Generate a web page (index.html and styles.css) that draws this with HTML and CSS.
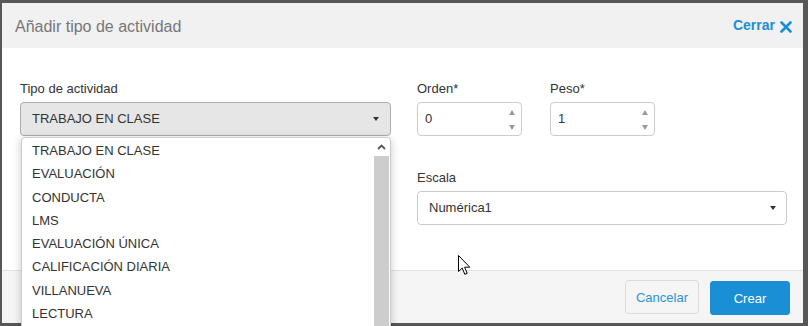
FILE: index.html
```html
<!DOCTYPE html>
<html lang="es">
<head>
<meta charset="utf-8">
<title>Añadir tipo de actividad</title>
<link rel="stylesheet" href="styles.css">
</head>
<body>
<div class="modal">
  <div class="modal-header">
    <h4 class="modal-title">Añadir tipo de actividad</h4>
    <a class="close-link">Cerrar <svg class="close-x" width="12" height="12" viewBox="0 0 12 12"><path d="M1.5 1.5 L10.5 10.5 M10.5 1.5 L1.5 10.5" stroke="#1a8fd6" stroke-width="2.6" stroke-linecap="round"/></svg></a>
  </div>
  <div class="modal-body">
    <div class="row">
      <div class="field field-tipo">
        <label class="lbl">Tipo de actividad</label>
        <div class="select select-active">TRABAJO EN CLASE<span class="caret"></span></div>
        <div class="dropdown">
          <ul class="options">
            <li>TRABAJO EN CLASE</li>
            <li>EVALUACIÓN</li>
            <li>CONDUCTA</li>
            <li>LMS</li>
            <li>EVALUACIÓN ÚNICA</li>
            <li>CALIFICACIÓN DIARIA</li>
            <li>VILLANUEVA</li>
            <li>LECTURA</li>
          </ul>
          <div class="scrollbar">
            <div class="sb-arrow"><svg width="9" height="6" viewBox="0 0 9 6"><path d="M1 5 L4.5 1.5 L8 5" fill="none" stroke="#555" stroke-width="1.8"/></svg></div>
            <div class="sb-thumb"></div>
          </div>
        </div>
      </div>
      <div class="field field-num">
        <label class="lbl">Orden*</label>
        <div class="num">0<span class="spin"><span class="up"></span><span class="down"></span></span></div>
      </div>
      <div class="field field-num">
        <label class="lbl">Peso*</label>
        <div class="num">1<span class="spin"><span class="up"></span><span class="down"></span></span></div>
      </div>
    </div>
    <div class="row row-two">
      <div class="field field-escala">
        <label class="lbl">Escala</label>
        <div class="select select-white">Numérica1<span class="caret"></span></div>
      </div>
    </div>
  </div>
  <div class="modal-footer">
    <button class="btn btn-cancel">Cancelar</button>
    <button class="btn btn-primary">Crear</button>
  </div>
</div>
<svg class="cursor" width="13" height="21" viewBox="0 0 13 21"><path d="M0.5 0.5 L0.5 16.5 L4.2 13 L6.8 19.3 L9.2 18.3 L6.6 12.2 L11.8 12.2 Z" fill="#fff" stroke="#000" stroke-width="1" stroke-linejoin="round"/></svg>
</body>
</html>
```
FILE: styles.css
```css
html, body {
  margin: 0;
  padding: 0;
}
body {
  width: 808px;
  height: 326px;
  overflow: hidden;
  background: #575757;
  font-family: "Liberation Sans", Arial, sans-serif;
  color: #333;
  position: relative;
}
.modal {
  margin: 3px 0 0 2px;
  width: 801px;
  height: 320px;
  background: #fff;
  display: flex;
  flex-direction: column;
}
.modal-header {
  height: 45px;
  background: #f1f1f1;
  display: flex;
  align-items: center;
  justify-content: space-between;
  padding: 0 11px 0 13px;
  box-sizing: border-box;
}
.modal-title {
  margin: 0;
  font-size: 16px;
  font-weight: normal;
  color: #777;
  position: relative;
  top: 1px;
}
.close-link {
  font-size: 14px;
  font-weight: bold;
  color: #1a8fd6;
  display: flex;
  align-items: center;
  gap: 5px;
  position: relative;
  top: -1px;
}
.close-x {
  position: relative;
  top: 2px;
}
.modal-body {
  flex: 1;
  padding: 32px 0 0 18px;
  box-sizing: border-box;
}
.row {
  display: flex;
}
.row-two {
  margin-top: 33px;
  padding-left: 397px;
}
.field {
  position: relative;
}
.field-tipo {
  width: 371px;
  margin-right: 26px;
}
.field-num {
  width: 105px;
  margin-right: 28px;
}
.field-escala {
  width: 370px;
}
.lbl {
  display: block;
  font-size: 13px;
  line-height: 18px;
  margin-bottom: 4px;
  color: #333;
}
.select {
  position: relative;
  height: 34px;
  box-sizing: border-box;
  border-radius: 4px;
  padding-left: 11px;
  font-size: 13px;
  line-height: 32px;
  color: #333;
}
.select-active {
  background: #e6e6e6;
  border: 1px solid #adadad;
}
.select-white {
  background: #fff;
  border: 1px solid #ccc;
}
.caret {
  position: absolute;
  right: 11px;
  top: 14px;
  width: 0;
  height: 0;
  border-left: 3.5px solid transparent;
  border-right: 3.5px solid transparent;
  border-top: 4px solid #333;
}
.select-white .caret {
  right: 10px;
}
.dropdown {
  position: absolute;
  left: 1px;
  top: 57px;
  width: 370px;
  height: 200px;
  background: #fff;
  border: 1px solid #ccc;
  border-radius: 4px 4px 0 0;
  box-shadow: 0 2px 8px rgba(0,0,0,0.22);
  box-sizing: border-box;
  overflow: hidden;
  z-index: 5;
}
.options {
  list-style: none;
  margin: 0;
  padding: 1px 0 0 0;
}
.options li {
  height: 23.3px;
  line-height: 23.3px;
  padding-left: 10px;
  font-size: 13px;
  color: #333;
  white-space: nowrap;
}
.scrollbar {
  position: absolute;
  right: 1px;
  top: 0;
  bottom: 0;
  width: 15px;
  background: #f1f1f1;
}
.sb-arrow {
  height: 18px;
  display: flex;
  justify-content: center;
  align-items: center;
  background: #fff;
}
.sb-thumb {
  position: absolute;
  top: 18px;
  left: 0;
  right: 0;
  bottom: 0;
  background: #cdcdcd;
}
.num {
  position: relative;
  height: 34px;
  box-sizing: border-box;
  border: 1px solid #ccc;
  border-radius: 4px;
  padding-left: 7px;
  font-size: 13px;
  line-height: 32px;
  color: #333;
}
.spin {
  position: absolute;
  right: 4px;
  top: 5px;
  width: 9px;
  height: 24px;
}
.spin .up, .spin .down {
  position: absolute;
  left: 1px;
  width: 0;
  height: 0;
  border-left: 3.5px solid transparent;
  border-right: 3.5px solid transparent;
}
.spin .up {
  top: 2px;
  border-bottom: 5px solid #999;
}
.spin .down {
  top: 17px;
  border-top: 5px solid #999;
}
.modal-footer {
  height: 53px;
  box-sizing: border-box;
  background: #f5f5f5;
  border-top: 1px solid #e2e2e2;
  display: flex;
  justify-content: flex-end;
  align-items: flex-start;
  gap: 11px;
  padding: 9px 13px 0 0;
}
.btn {
  height: 34px;
  font-family: "Liberation Sans", Arial, sans-serif;
  font-size: 13px;
  border-radius: 4px;
  cursor: pointer;
}
.btn-cancel {
  width: 74px;
  background: #f5f5f5;
  border: 1px solid #dcdcdc;
  color: #2a94d6;
}
.btn-primary {
  width: 80px;
  margin-top: 1px;
  background: #1a8fd6;
  border: 1px solid #1a8fd6;
  color: #fff;
  border-radius: 3px;
}
.cursor {
  position: absolute;
  left: 458px;
  top: 255px;
  z-index: 10;
}
```
